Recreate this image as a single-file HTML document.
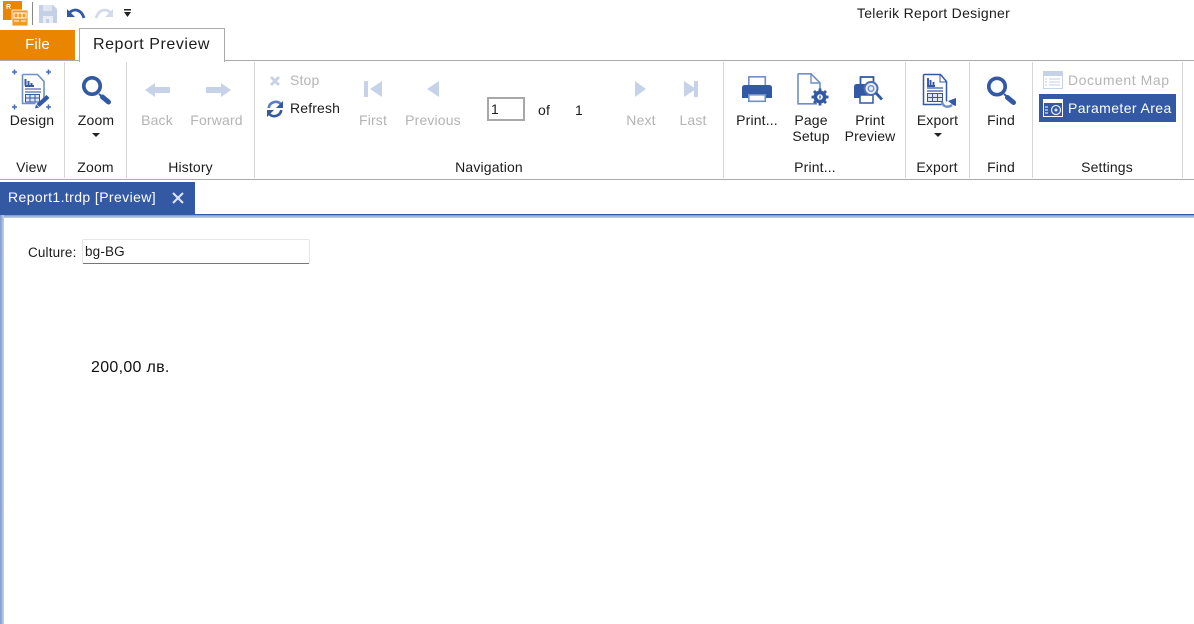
<!DOCTYPE html>
<html><head><meta charset="utf-8"><style>
html,body{margin:0;padding:0;background:#fff}
#r{position:relative;width:1194px;height:624px;overflow:hidden;background:#fff;font-family:"Liberation Sans",sans-serif;font-size:14px;color:#1c1c1c}
.a{position:absolute}
.t{position:absolute;white-space:nowrap;line-height:16px;letter-spacing:.15px}
.c{transform:translateX(-50%)}
.d{color:#b4b4b4}
.s{position:absolute;width:1px;top:62px;height:116px;background:#d6d6d6}
svg{position:absolute;overflow:visible}
</style></head><body><div id="r">

<!-- title bar -->
<svg style="left:0;top:0" width="140" height="28" viewBox="0 0 140 28">
<rect x="3" y="1" width="19" height="19" fill="#ea8500"/>
<text x="6" y="9" font-size="7" font-weight="bold" fill="#fff" font-family="Liberation Sans">R</text>
<rect x="12" y="10" width="16" height="16" fill="#f09a28" stroke="#fff" stroke-width=".8"/>
<path d="M14 13h12v5H14zM14 21h5M21 21h5M18 13v5M22 13v5" stroke="#fff" fill="none"/>
<rect x="32" y="2" width="1" height="23" fill="#888"/>
<path d="M39 5h14l4 4v14H39z" fill="#c3d0e6"/><rect x="43" y="5" width="9" height="6" fill="#dfe6f2"/><rect x="43" y="16" width="10" height="7" fill="#e9eef6"/><rect x="46" y="19" width="3" height="4" fill="#c3d0e6"/>
<path d="M69 13c5-5 12-4 15 5" stroke="#3359a5" stroke-width="2.800" fill="none"/><path d="M67 9v8h8z" fill="#3359a5"/>
<path d="M111 13c-5-5-12-4-15 5" stroke="#d3dbea" stroke-width="2.800" fill="none"/><path d="M113 9v8h-8z" fill="#d3dbea"/>
<rect x="124" y="9" width="7" height="1.5" fill="#222"/><path d="M124 12h7l-3.500 5z" fill="#222"/>
</svg>
<div class="t c" style="left:933.500px;top:5px;font-size:14px;letter-spacing:.3px">Telerik Report Designer</div>

<!-- tabs -->
<div class="a" style="left:0;top:60px;width:1194px;height:1px;background:#ababab"></div>
<div class="a" style="left:0;top:30px;width:75px;height:30px;background:#ea8500"></div>
<div class="t c" style="left:37.500px;top:37px;color:#fff;font-size:15px">File</div>
<div class="a" style="left:79px;top:28px;width:144px;height:33px;background:#fff;border:1px solid #ababab;border-bottom:0;box-sizing:content-box"></div>
<div class="t c" style="left:151.500px;top:37px;font-size:16px;letter-spacing:.55px">Report Preview</div>

<!-- separators -->
<div class="s" style="left:64px"></div><div class="s" style="left:126px"></div><div class="s" style="left:254px"></div><div class="s" style="left:723px"></div><div class="s" style="left:905px"></div><div class="s" style="left:969px"></div><div class="s" style="left:1032px"></div><div class="s" style="left:1182px"></div>
<div class="a" style="left:0;top:179px;width:1194px;height:1px;background:#ababab"></div>

<!-- Design icon -->
<svg style="left:10px;top:68px" width="44" height="44" viewBox="0 0 44 44">
<path d="M2 4h5M4.500 1.500v5M36 4h5M38.500 1.500v5M2 39h5M4.500 36.500v5M36 39h5M38.500 36.500v5" stroke="#4a6db0" stroke-width="1.600"/>
<path d="M12.500 6.500h15l6.500 7v17M12.500 6.500v29h13" fill="#fff" stroke="#6f8fc6" stroke-width="1.600"/>
<path d="M15.500 11v6.500M18.500 18v-5M21.500 18v-3M15 18h9" stroke="#3359a5" stroke-width="2" fill="none"/>
<path d="M15 21h16M15 24h16" stroke="#4a6db0" stroke-width="1.300"/>
<rect x="15.500" y="26.500" width="14" height="7.500" fill="#dfe6f2" stroke="#3359a5"/><path d="M20 26v8M25 26v8M15 30h15" stroke="#3359a5"/>
<path d="M26.500 36l10-9 3 3-10 9z" fill="#3359a5"/><path d="M25 40.500l1-4 3 3z" fill="#3359a5"/>
</svg>
<div class="t c" style="left:32px;top:112px">Design</div>
<div class="t c" style="left:31.500px;top:159px">View</div>

<!-- Zoom -->
<svg style="left:80px;top:74px" width="34" height="34" viewBox="0 0 34 34">
<circle cx="12" cy="12" r="8.200" fill="none" stroke="#3359a5" stroke-width="3.700"/>
<path d="M19 20l11 9" stroke="#3359a5" stroke-width="2"/><path d="M22.500 23l6 5" stroke="#3359a5" stroke-width="5" stroke-linecap="round"/>
</svg>
<div class="t c" style="left:96px;top:112px">Zoom</div>
<div class="a" style="left:92px;top:133px;width:0;height:0;border-left:4px solid transparent;border-right:4px solid transparent;border-top:4px solid #222"></div>
<div class="t c" style="left:95.500px;top:159px">Zoom</div>

<!-- History -->
<svg style="left:140px;top:78px" width="96" height="24" viewBox="0 0 96 24">
<path d="M5 12l10-7v4h15v6H15v4z" fill="#c6d2e7"/>
<path d="M91 12l-10-7v4H66v6h15v4z" fill="#c6d2e7"/>
</svg>
<div class="t c d" style="left:157px;top:112px">Back</div>
<div class="t c d" style="left:216.500px;top:112px">Forward</div>
<div class="t c" style="left:190.500px;top:159px">History</div>

<!-- Stop / Refresh -->
<svg style="left:266px;top:72px" width="20" height="46" viewBox="0 0 20 46">
<path d="M5 5l8 8M13 5l-8 8" stroke="#c6d2e7" stroke-width="2.800"/>
<path d="M2.800 36c.5-6 8-8 12-4" stroke="#5a7dbd" stroke-width="2.600" fill="none"/>
<path d="M15.200 38c-.5 6-8 8-12 4" stroke="#3359a5" stroke-width="2.600" fill="none"/>
<path d="M17 29v7h-7z" fill="#3359a5"/><path d="M1 45v-7h7z" fill="#3359a5"/>
</svg>
<div class="t d" style="left:290px;top:72px">Stop</div>
<div class="t" style="left:290px;top:100px">Refresh</div>

<!-- Navigation -->
<svg style="left:360px;top:78px" width="350" height="24" viewBox="0 0 350 24">
<rect x="4" y="3" width="4" height="16" fill="#c6d2e7"/><path d="M22 3v16l-12-8z" fill="#c6d2e7"/>
<path d="M79 3v16l-12-8z" fill="#c6d2e7"/>
<path d="M275 3v16l11-8z" fill="#c6d2e7"/>
<path d="M324 3v16l12-8z" fill="#c6d2e7"/><rect x="334" y="3" width="4" height="16" fill="#c6d2e7"/>
</svg>
<div class="t c d" style="left:373px;top:112px">First</div>
<div class="t c d" style="left:433px;top:112px">Previous</div>
<div class="a" style="left:487px;top:97px;width:38px;height:24px;box-sizing:border-box;border:2px solid #a8a8a8"></div>
<div class="t" style="left:491px;top:101px">1</div>
<div class="t c" style="left:544px;top:102px">of</div>
<div class="t c" style="left:579px;top:102px">1</div>
<div class="t c d" style="left:641px;top:112px">Next</div>
<div class="t c d" style="left:693px;top:112px">Last</div>
<div class="t c" style="left:489px;top:159px">Navigation</div>

<!-- Print group -->
<svg style="left:738px;top:72px" width="150" height="40" viewBox="0 0 150 40">
<rect x="10.800" y="4.800" width="16.500" height="10" fill="#fff" stroke="#6f8fc6" stroke-width="1.600"/>
<path d="M7 13h24c2 0 3 1 3 3v10H4V16c0-2 1-3 3-3z" fill="#3359a5"/>
<rect x="10.800" y="22.800" width="16.500" height="6.500" fill="#fff" stroke="#6f8fc6" stroke-width="1.600"/>
<path d="M60 1.800h13l9 9v13M60 1.800v30h19" fill="#fff" stroke="#6f8fc6" stroke-width="1.600"/>
<path d="M73 2v9h9" fill="none" stroke="#6f8fc6" stroke-width="1.400"/>
<circle cx="82" cy="25" r="6.500" fill="#3359a5"/><path d="M82 16.500v17M73.500 25h17M76 19l12 12M88 19L76 31" stroke="#3359a5" stroke-width="2.800"/><circle cx="82" cy="25" r="2.800" fill="#fff"/><rect x="81.300" y="23.500" width="1.400" height="3" fill="#3359a5"/>
<rect x="122.500" y="5" width="13" height="12" fill="#fff" stroke="#3359a5" stroke-width="1.800"/>
<path d="M119 12h14v14h-17V15c0-2 1-3 3-3z" fill="#3359a5"/>
<rect x="122" y="23" width="13" height="8" fill="#fff" stroke="#3359a5" stroke-width="1.500"/>
<circle cx="133" cy="16.500" r="6.500" fill="#e9eef6" stroke="#4a6db0" stroke-width="2"/><circle cx="133" cy="16.500" r="2.800" fill="none" stroke="#6f8fc6" stroke-width="1.400"/>
<path d="M138 21l6 6.500" stroke="#3359a5" stroke-width="2.800"/>
</svg>
<div class="t c" style="left:757px;top:112px">Print...</div>
<div class="t c" style="left:811px;top:112px">Page</div>
<div class="t c" style="left:811px;top:128px">Setup</div>
<div class="t c" style="left:870px;top:112px">Print</div>
<div class="t c" style="left:870px;top:128px">Preview</div>
<div class="t c" style="left:815px;top:159px">Print...</div>

<!-- Export -->
<svg style="left:920px;top:72px" width="40" height="40" viewBox="0 0 40 40">
<path d="M3.500 2.500h17l6 7v20M3.500 2.500v30h18" fill="#fff" stroke="#3359a5" stroke-width="1.500"/>
<path d="M20 3v7h7" fill="none" stroke="#3359a5"/>
<path d="M8 6v8h7M10.500 13V8M13.500 13v-3" stroke="#3359a5" stroke-width="1.900" fill="none"/>
<path d="M7 16h16M7 19h16" stroke="#3359a5" stroke-width="1.200"/>
<rect x="7.500" y="21.500" width="15" height="8" fill="#dfe6f2" stroke="#3359a5"/><path d="M12.500 21v9M17.500 21v9M7 25.500h16" stroke="#3359a5"/>
<path d="M22 30c1 5 6 6 10 3" stroke="#6f8fc6" stroke-width="2.400" fill="none"/>
<path d="M28 29l8-3v8l-3-1z" fill="#3359a5"/>
</svg>
<div class="t c" style="left:937.500px;top:112px">Export</div>
<div class="a" style="left:933.500px;top:133px;width:0;height:0;border-left:4px solid transparent;border-right:4px solid transparent;border-top:4px solid #222"></div>
<div class="t c" style="left:937px;top:159px">Export</div>

<!-- Find -->
<svg style="left:985px;top:74px" width="34" height="34" viewBox="0 0 34 34">
<circle cx="12" cy="12.500" r="8.200" fill="none" stroke="#3359a5" stroke-width="3.700"/>
<path d="M19 20l6 5" stroke="#3359a5" stroke-width="2"/><path d="M22.500 23.500l6 5" stroke="#3359a5" stroke-width="5" stroke-linecap="round"/>
</svg>
<div class="t c" style="left:1001px;top:112px">Find</div>
<div class="t c" style="left:1001px;top:159px">Find</div>

<!-- Settings -->
<svg style="left:1043px;top:71px" width="20" height="18" viewBox="0 0 20 18">
<rect width="20" height="18" fill="#c6d2e7"/><rect x="1" y="5" width="18" height="12" fill="#fff"/>
<path d="M2 8h2M2 11h2M2 14h2M6 8h11M6 11h11M6 14h11" stroke="#c6d2e7"/>
</svg>
<div class="t d" style="left:1068px;top:72px;letter-spacing:.55px">Document Map</div>
<div class="a" style="left:1039px;top:94px;width:137px;height:28px;background:#3359a5"></div>
<svg style="left:1043px;top:99px" width="20" height="18" viewBox="0 0 20 18">
<rect width="20" height="18" fill="#fff"/><rect x="1" y="4" width="18" height="13" fill="#3359a5"/>
<path d="M2 8h3M2 11h3M2 14h3" stroke="#fff"/>
<circle cx="13" cy="11" r="4.500" fill="none" stroke="#dfe6f2" stroke-width="1.300"/><circle cx="13" cy="11" r="1.500" fill="#dfe6f2"/>
</svg>
<div class="t" style="left:1068px;top:100px;color:#fff;letter-spacing:.4px">Parameter Area</div>
<div class="t c" style="left:1107px;top:159px">Settings</div>

<!-- document tab -->
<div class="a" style="left:0;top:182px;width:195px;height:33px;background:#3359a5"></div>
<div class="t" style="left:8px;top:189px;color:#fff;letter-spacing:.4px">Report1.trdp [Preview]</div>
<svg style="left:172px;top:192px" width="12" height="12" viewBox="0 0 12 12"><path d="M1 1l10 10M11 1L1 11" stroke="#dfe6f2" stroke-width="2"/></svg>
<div class="a" style="left:0;top:214px;width:1194px;height:1px;background:#3359a5"></div>
<div class="a" style="left:0;top:215px;width:1194px;height:3px;background:linear-gradient(#7d97cc,#c6d2e9)"></div>
<div class="a" style="left:0;top:215px;width:4px;height:409px;background:linear-gradient(90deg,#7d97cc,#c6d2e9)"></div>

<!-- params -->
<div class="t" style="left:28px;top:245px;font-size:13.500px">Culture:</div>
<div class="a" style="left:82px;top:239px;width:228px;height:25px;box-sizing:border-box;border:1px solid #e6e6e6;border-bottom:1px solid #777;border-radius:2px"></div>
<div class="t" style="left:85px;top:244px;font-size:13.500px">bg-BG</div>

<div class="t" style="left:91px;top:360px;font-size:16px;color:#111;letter-spacing:.3px">200,00 лв.</div>

</div></body></html>
